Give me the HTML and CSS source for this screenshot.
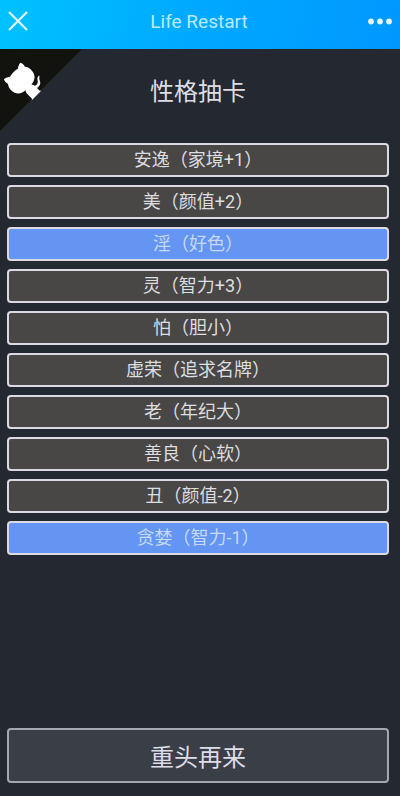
FILE: index.html
```html
<!DOCTYPE html>
<html lang="zh-CN">
<head>
    <meta charset="UTF-8">
    <meta name="viewport" content="width=device-width, initial-scale=1.0">
    <title>Life Restart</title>
    <link rel="stylesheet" href="styles.css">
</head>
<body>
    <header class="topbar">
        <button class="iconBtn" type="button" aria-label="关闭">
            <svg width="22" height="22" viewBox="0 0 22 22"><path d="M2 1L20 19M20 1L2 19" stroke="#e4f8ff" stroke-width="2.2" fill="none"/></svg>
        </button>
        <div class="appName">Life Restart</div>
        <button class="iconBtn" type="button" aria-label="更多">
            <svg width="26" height="8" viewBox="0 0 26 8" fill="#e4f4ff"><circle cx="4" cy="3.5" r="2.9"/><circle cx="13" cy="3.5" r="2.9"/><circle cx="22" cy="3.5" r="2.9"/></svg>
        </button>
    </header>

    <main class="page">
        <a class="githubCorner" href="#" aria-label="GitHub">
            <svg width="82" height="82" viewBox="0 0 82 82">
                <path d="M0 0H82L0 82Z" fill="#12120f"/>
                <g transform="translate(84 -1) scale(-.37 .37)" fill="#fff">
                    <path d="M128.3,109.0 C113.8,99.7 119.0,89.6 119.0,89.6 C122.0,82.7 120.5,78.6 120.5,78.6 C119.2,72.0 123.4,76.3 123.4,76.3 C127.3,80.9 125.5,87.3 125.5,87.3 C122.9,97.6 130.6,101.9 134.4,103.2"/>
                    <path d="M115.0,115.0 C114.9,115.1 118.7,116.5 119.8,115.4 L133.7,101.6 C136.9,99.2 139.9,98.4 142.2,98.6 C133.8,88.0 127.5,74.4 143.8,58.0 C148.5,53.4 154.0,51.2 159.7,51.0 C160.3,49.4 163.2,43.6 171.4,40.1 C171.4,40.1 176.1,42.5 178.8,56.2 C183.1,58.6 187.2,61.8 190.9,65.4 C194.5,69.0 197.7,73.2 200.1,77.6 C213.8,80.2 216.3,84.9 216.3,84.9 C212.7,93.1 206.9,96.0 205.4,96.6 C205.1,102.4 203.0,107.8 198.3,112.5 C181.9,128.9 168.3,122.5 157.7,114.1 C157.9,116.9 156.7,120.9 152.7,124.9 L141.0,136.5 C139.8,137.7 141.6,141.9 141.8,141.8 Z"/>
                </g>
            </svg>
        </a>

        <h1>性格抽卡</h1>

        <ul class="talents">
            <li><button class="talent" type="button">安逸（家境+1）</button></li>
            <li><button class="talent" type="button">美（颜值+2）</button></li>
            <li><button class="talent selected" type="button" aria-pressed="true">淫（好色）</button></li>
            <li><button class="talent" type="button">灵（智力+3）</button></li>
            <li><button class="talent" type="button">怕（胆小）</button></li>
            <li><button class="talent" type="button">虚荣（追求名牌）</button></li>
            <li><button class="talent" type="button">老（年纪大）</button></li>
            <li><button class="talent" type="button">善良（心软）</button></li>
            <li><button class="talent" type="button">丑（颜值-2）</button></li>
            <li><button class="talent selected" type="button" aria-pressed="true">贪婪（智力-1）</button></li>
        </ul>

        <button class="restart" type="button">重头再来</button>
    </main>
</body>
</html>
```
FILE: styles.css
```css
*{
    box-sizing: border-box;
}

body{
    display: flex;
    flex-direction: column;
    min-height: 100vh;
    margin: 0;
    background: #242830;
    color: #dedde6;
    font-family: Roboto, "Noto Sans CJK SC", sans-serif;
}

button{
    font-family: inherit;
    cursor: pointer;
}

.topbar{
    display: flex;
    align-items: center;
    justify-content: space-between;
    height: 49px;
    padding: 0 7px 6px 5px;
    background: linear-gradient(100deg, #00c2ff, #00a8ff 50%, #0098ff);
}

.iconBtn{
    display: flex;
    width: 26px;
    padding: 0;
    border: none;
    background: none;
    justify-content: center;
}

.appName{
    color: #b8ebff;
    font-size: 19px;
}

.page{
    position: relative;
    display: flex;
    flex: 1;
    flex-direction: column;
    padding: 24px 11px 13px 7px;
}

.githubCorner{
    position: absolute;
    top: 0;
    left: 0;
}

.githubCorner svg{
    display: block;
}

h1{
    margin: 0 0 32px;
    font-size: 24px;
    font-weight: 400;
    line-height: 38px;
    text-align: center;
}

.talents{
    display: flex;
    flex-direction: column;
    gap: 8px;
    margin: 0;
    padding: 0;
    list-style: none;
}

.talent{
    display: block;
    width: 100%;
    height: 34px;
    padding: 0;
    border: 2px solid #dcd9e3;
    border-radius: 4px;
    background: #484745;
    color: #dedde0;
    font-size: 18px;
    line-height: 28px;
}

.talent.selected{
    background: #6495f3;
    color: #c6d9f5;
}

.restart{
    height: 55px;
    margin-top: auto;
    border: 2px solid #a3a8b0;
    border-radius: 4px;
    background: #3a3e46;
    color: #dedde6;
    font-size: 24px;
}
```
